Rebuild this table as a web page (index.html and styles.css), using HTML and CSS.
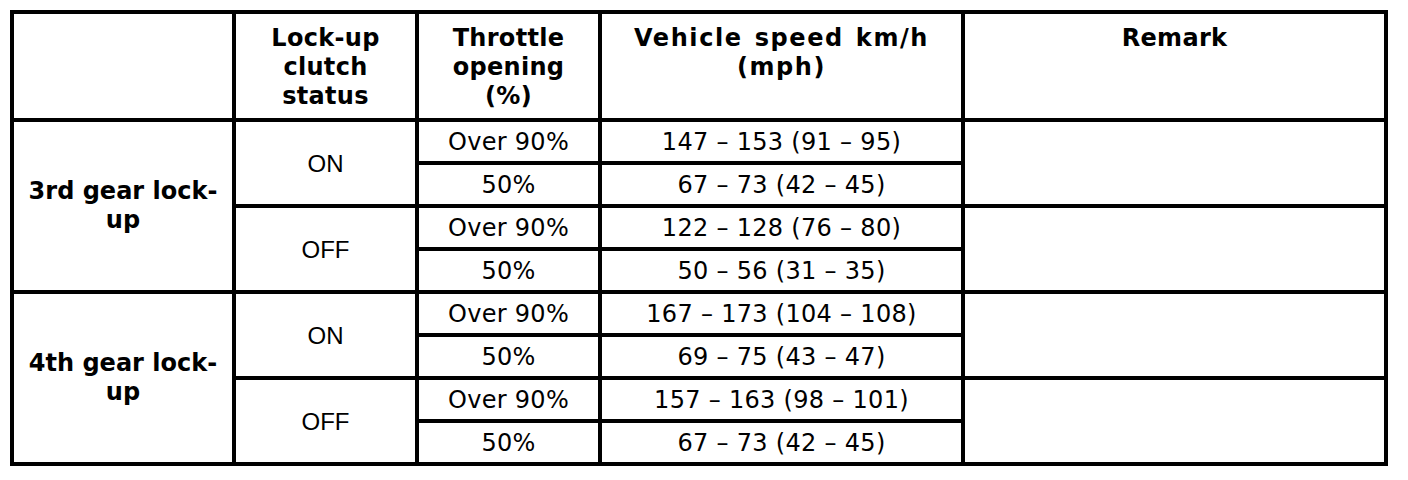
FILE: index.html
```html
<!DOCTYPE html>
<html lang="en">
<head>
<meta charset="utf-8">
<title>Lock-up table</title>
<link rel="stylesheet" href="styles.css">
</head>
<body>
<div class="table" role="table">
  <div class="cell head"></div>
  <div class="cell head">Lock-up<br>clutch<br>status</div>
  <div class="cell head">Throttle<br>opening<br>(%)</div>
  <div class="cell head wide">Vehicle speed km/h<br>(mph)</div>
  <div class="cell head">Remark</div>

  <div class="cell label span4">3rd gear lock-<br>up</div>
  <div class="cell status span2">ON</div>
  <div class="cell val">Over 90%</div>
  <div class="cell val">147 – 153 (91 – 95)</div>
  <div class="cell span2"></div>
  <div class="cell val">50%</div>
  <div class="cell val">67 – 73 (42 – 45)</div>
  <div class="cell status span2">OFF</div>
  <div class="cell val">Over 90%</div>
  <div class="cell val">122 – 128 (76 – 80)</div>
  <div class="cell span2"></div>
  <div class="cell val">50%</div>
  <div class="cell val">50 – 56 (31 – 35)</div>

  <div class="cell label span4">4th gear lock-<br>up</div>
  <div class="cell status span2">ON</div>
  <div class="cell val">Over 90%</div>
  <div class="cell val">167 – 173 (104 – 108)</div>
  <div class="cell span2"></div>
  <div class="cell val">50%</div>
  <div class="cell val">69 – 75 (43 – 47)</div>
  <div class="cell status span2">OFF</div>
  <div class="cell val">Over 90%</div>
  <div class="cell val">157 – 163 (98 – 101)</div>
  <div class="cell span2"></div>
  <div class="cell val">50%</div>
  <div class="cell val">67 – 73 (42 – 45)</div>
</div>
</body>
</html>
```
FILE: styles.css
```css
html, body {
  margin: 0;
  background: #fff;
}
body {
  padding: 10px;
  font-family: "DejaVu Sans", Verdana, sans-serif;
  font-size: 24px;
  color: #000;
}
.table {
  display: grid;
  width: max-content;
  grid-template-columns: 218px 179px 179px 359px 419px;
  grid-template-rows: 104px repeat(8, 39px);
  gap: 4px;
  padding: 4px;
  background: #000;
}
.cell {
  background: #fff;
  display: flex;
  align-items: center;
  justify-content: center;
  text-align: center;
  line-height: 29px;
}
.head {
  align-items: flex-start;
  padding-top: 10px;
  font-weight: bold;
  letter-spacing: 0.3px;
}
.wide {
  word-spacing: 2px;
  letter-spacing: 1.6px;
}
.label {
  font-weight: bold;
}
.span4 { grid-row: span 4; }
.span2 { grid-row: span 2; }
.status {
  font-family: "Liberation Sans", Arial, sans-serif;
}
.val {
  padding-top: 1px;
  letter-spacing: 0.3px;
}
```
